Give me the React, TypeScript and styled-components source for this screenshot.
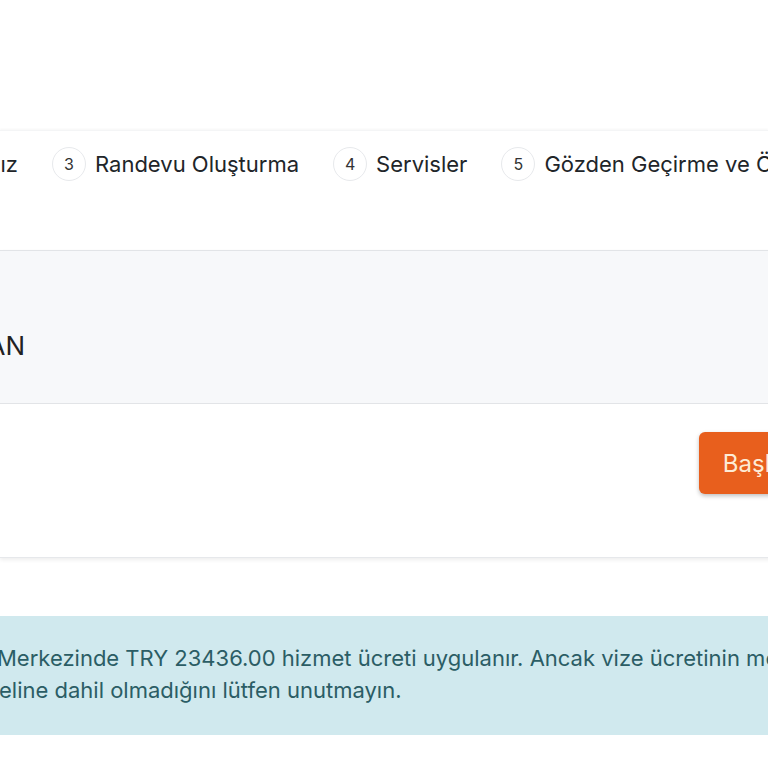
import styled, { createGlobalStyle } from 'styled-components';

const GlobalStyle = createGlobalStyle`
  body {
    margin: 0;
    background: #ffffff;
    font-family: Inter, "Noto Sans", "Liberation Sans", sans-serif;
    color: #212529;
  }
`;

const Page = styled.div`
  width: 100%;
  overflow: hidden;
  padding-top: 130px;
  padding-bottom: 40px;
`;

const StepperBar = styled.div`
  display: flex;
  align-items: center;
  gap: 34px;
  height: 66px;
  background: #fff;
  box-shadow: 0 -1px 2px rgba(0, 0, 0, 0.04);
  border-top: 1px solid #f4f5f6;
  white-space: nowrap;
`;

// keeps the tail of a label whose start lies off the left edge
const CutText = styled.div<{ $visible: number }>`
  display: flex;
  justify-content: flex-end;
  flex-shrink: 0;
  width: ${(p) => p.$visible}px;
  overflow: hidden;
  white-space: nowrap;
`;

const Step = styled.div`
  display: flex;
  align-items: center;
  gap: 9px;
  flex-shrink: 0;
`;

const StepNumber = styled.span`
  width: 32px;
  height: 32px;
  border-radius: 50%;
  border: 1px solid #e7e9ec;
  display: flex;
  align-items: center;
  justify-content: center;
  font-size: 16px;
  color: #333;
`;

const StepLabel = styled.span`
  font-size: 22px;
  color: #212529;
`;

const Card = styled.div`
  margin-top: 53px;
  width: calc(100% + 60px);
  background: #fff;
  border-top: 1px solid #e2e4e7;
  border-bottom: 1px solid #e6e8eb;
  box-shadow: 0 2px 4px rgba(0, 0, 0, 0.07);
`;

const CardHeader = styled.div`
  height: 153px;
  box-sizing: border-box;
  background: #f7f8fa;
  border-bottom: 1px solid #e2e4e7;
  display: flex;
  flex-direction: column;
  justify-content: flex-end;
  padding-bottom: 41px;
`;

const HeaderValue = styled.span`
  font-size: 26px;
  line-height: 32px;
  color: #222;
`;

const CardBody = styled.div`
  height: 153px;
  box-sizing: border-box;
  display: flex;
  justify-content: flex-end;
  align-items: flex-start;
  padding: 28px 20px 0 0;
`;

const PrimaryButton = styled.button`
  height: 62px;
  padding: 0 24px;
  border: none;
  border-radius: 6px;
  background: #e85f1d;
  color: #fdebd5;
  font-family: inherit;
  font-size: 24px;
  box-shadow: 0 2px 4px rgba(0, 0, 0, 0.25);
  cursor: pointer;
`;

const Alert = styled.div`
  margin-top: 58px;
  background: #d0e9ee;
  padding: 26px 0 29px;
  color: #2b5d65;
  font-size: 22px;
  line-height: 32px;
  white-space: nowrap;
`;

const AlertLine = styled.div<{ $shift: number }>`
  text-indent: ${(p) => p.$shift}px;
`;

const App = () => {
  return (
    <>
      <GlobalStyle />
      <Page>
        <StepperBar>
          <CutText $visible={18}>
            <StepLabel>Detaylarınız</StepLabel>
          </CutText>
          <Step>
            <StepNumber>3</StepNumber>
            <StepLabel>Randevu Oluşturma</StepLabel>
          </Step>
          <Step>
            <StepNumber>4</StepNumber>
            <StepLabel>Servisler</StepLabel>
          </Step>
          <Step>
            <StepNumber>5</StepNumber>
            <StepLabel>Gözden Geçirme ve Ödeme</StepLabel>
          </Step>
        </StepperBar>

        <Card>
          <CardHeader>
            <CutText $visible={25}>
              <HeaderValue>SOYADAN</HeaderValue>
            </CutText>
          </CardHeader>
          <CardBody>
            <PrimaryButton>Başla</PrimaryButton>
          </CardBody>
        </Card>

        <Alert>
          <AlertLine $shift={-3}>
            Merkezinde TRY 23436.00 hizmet ücreti uygulanır. Ancak vize ücretinin merkez ücretine
          </AlertLine>
          <AlertLine $shift={-1}>eline dahil olmadığını lütfen unutmayın.</AlertLine>
        </Alert>
      </Page>
    </>
  );
};

export default App;
